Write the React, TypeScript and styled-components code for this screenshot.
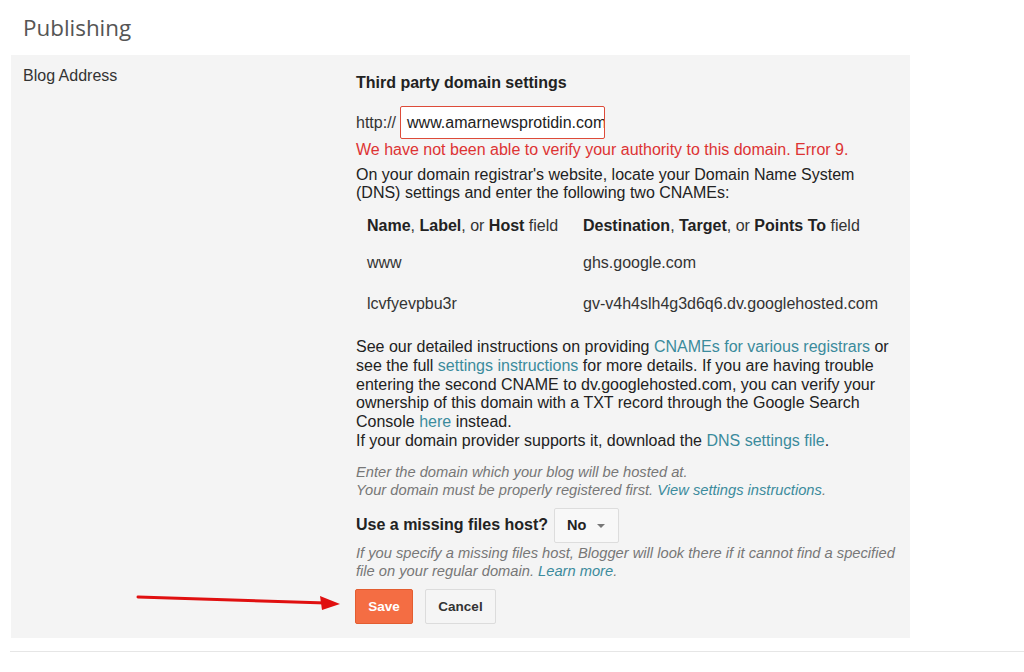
import React from "react";
import styled, { createGlobalStyle } from "styled-components";

const Global = createGlobalStyle`
  html, body { margin: 0; padding: 0; background: #ffffff; }
  body { font-family: "Liberation Sans", Arial, sans-serif; color: #333; }
`;

const Page = styled.div`
  position: relative;
  width: 1024px;
  height: 672px;
  overflow: hidden;
`;

const Title = styled.h1`
  margin: 0;
  padding: 12px 0 0 23px;
  height: 43px;
  font-family: "Open Sans", sans-serif;
  font-weight: 400;
  font-size: 22.4px;
  line-height: 32px;
  color: #555;
`;

const Panel = styled.section`
  margin-left: 11px;
  width: 899px;
  height: 583px;
  box-sizing: border-box;
  background: #f4f4f4;
  display: flex;
  padding-top: 12px;
`;

const Label = styled.div`
  width: 345px;
  box-sizing: border-box;
  padding-left: 12px;
  font-size: 16px;
  line-height: 18px;
  color: #333;
`;

const Content = styled.div`
  width: 543px;
  padding-top: 7px;
  font-size: 16px;
  line-height: 18px;
  color: #222;
`;

const Heading = styled.div`
  font-weight: bold;
  color: #222;
`;

const InputRow = styled.div`
  margin-top: 14px;
  display: flex;
  align-items: center;
  gap: 4px;
`;

const Prefix = styled.span`
  color: #333;
`;

const DomainInput = styled.div`
  width: 205px;
  height: 33px;
  box-sizing: border-box;
  border: 1px solid #dd4b39;
  border-radius: 2px;
  background: #fff;
  padding: 0 6px;
  display: flex;
  align-items: center;
  overflow: hidden;
  white-space: nowrap;
  font-size: 16px;
  color: #222;
`;

const ErrorText = styled.div`
  margin-top: 2px;
  color: #dd3333;
`;

const Para = styled.p<{ $top: number }>`
  margin: ${(p) => p.$top}px 0 0;
  line-height: 18.8px;
  color: #222;
`;

const Link = styled.span`
  color: #3b8b9c;
`;

const Table = styled.div`
  margin-top: 6px;
  display: grid;
  grid-template-columns: 216px 1fr;
`;

const Cell = styled.div<{ $h: number }>`
  height: ${(p) => p.$h}px;
  display: flex;
  align-items: center;
  padding-left: 11px;
  color: #333;
  white-space: nowrap;
  & b { color: #222; }
`;

const Hint = styled.div<{ $top: number }>`
  margin-top: ${(p) => p.$top}px;
  font-size: 14.7px;
  line-height: 18px;
  font-style: italic;
  color: #777;
`;

const HostRow = styled.div`
  margin-top: 9px;
  display: flex;
  align-items: center;
  gap: 6px;
`;

const HostLabel = styled.span`
  font-weight: bold;
  color: #222;
`;

const Select = styled.div`
  width: 65px;
  height: 35px;
  box-sizing: border-box;
  border: 1px solid #ddd;
  border-radius: 2px;
  background: #f8f8f8;
  display: flex;
  align-items: center;
  padding-left: 12px;
  gap: 11px;
  font-size: 14.5px;
  font-weight: bold;
  color: #222;
`;

const Caret = styled.span`
  width: 0;
  height: 0;
  border-left: 4px solid transparent;
  border-right: 4px solid transparent;
  border-top: 4px solid #777;
  margin-top: 2px;
`;

const Buttons = styled.div`
  margin-top: 9px;
  display: flex;
  gap: 12px;
  margin-left: -1px;
`;

const Button = styled.button<{ $primary?: boolean }>`
  height: 35px;
  padding: 0;
  width: ${(p) => (p.$primary ? 58 : 71)}px;
  border-radius: 2px;
  font-family: "Liberation Sans", Arial, sans-serif;
  font-size: 13.5px;
  font-weight: bold;
  cursor: pointer;
  border: 1px solid ${(p) => (p.$primary ? "#e35d30" : "#dcdcdc")};
  background: ${(p) => (p.$primary ? "#f46d43" : "#f5f5f5")};
  color: ${(p) => (p.$primary ? "#fff" : "#333")};
`;

const Divider = styled.div`
  margin: 13px 0 0 10px;
  height: 1px;
  background: #e6e6e6;
`;

const Arrow = styled.svg`
  position: absolute;
  left: 130px;
  top: 588px;
`;

export default function App() {
  return (
    <Page>
      <Global />
      <Title>Publishing</Title>
      <Panel>
        <Label>Blog Address</Label>
        <Content>
          <Heading>Third party domain settings</Heading>
          <InputRow>
            <Prefix>http://</Prefix>
            <DomainInput>www.amarnewsprotidin.com</DomainInput>
          </InputRow>
          <ErrorText>We have not been able to verify your authority to this domain. Error 9.</ErrorText>
          <Para $top={7} style={{ lineHeight: "18px" }}>
            On your domain registrar's website, locate your Domain Name System (DNS) settings and enter the following two CNAMEs:
          </Para>
          <Table>
            <Cell $h={36}>
              <span><b>Name</b>, <b>Label</b>, or <b>Host</b> field</span>
            </Cell>
            <Cell $h={36}>
              <span><b>Destination</b>, <b>Target</b>, or <b>Points To</b> field</span>
            </Cell>
            <Cell $h={38}>www</Cell>
            <Cell $h={38}>ghs.google.com</Cell>
            <Cell $h={44}>lcvfyevpbu3r</Cell>
            <Cell $h={44}>gv-v4h4slh4g3d6q6.dv.googlehosted.com</Cell>
          </Table>
          <Para $top={12}>
            See our detailed instructions on providing <Link>CNAMEs for various registrars</Link> or see the full{" "}
            <Link>settings instructions</Link> for more details. If you are having trouble entering the second CNAME to
            dv.googlehosted.com, you can verify your ownership of this domain with a TXT record through the Google Search
            Console <Link>here</Link> instead.
            <br />
            If your domain provider supports it, download the <Link>DNS settings file</Link>.
          </Para>
          <Hint $top={12}>
            Enter the domain which your blog will be hosted at.
            <br />
            Your domain must be properly registered first. <Link>View settings instructions</Link>.
          </Hint>
          <HostRow>
            <HostLabel>Use a missing files host?</HostLabel>
            <Select>
              No
              <Caret />
            </Select>
          </HostRow>
          <Hint $top={1}>
            If you specify a missing files host, Blogger will look there if it cannot find a specified file on your regular
            domain. <Link>Learn more</Link>.
          </Hint>
          <Buttons>
            <Button $primary>Save</Button>
            <Button>Cancel</Button>
          </Buttons>
        </Content>
      </Panel>
      <Divider />
      <Arrow width="215" height="26" viewBox="0 0 215 26">
        <line x1="8" y1="9" x2="196" y2="15" stroke="#e01010" strokeWidth="3" strokeLinecap="round" />
        <polygon points="210,16 190,8 192,22" fill="#e01010" />
      </Arrow>
    </Page>
  );
}
